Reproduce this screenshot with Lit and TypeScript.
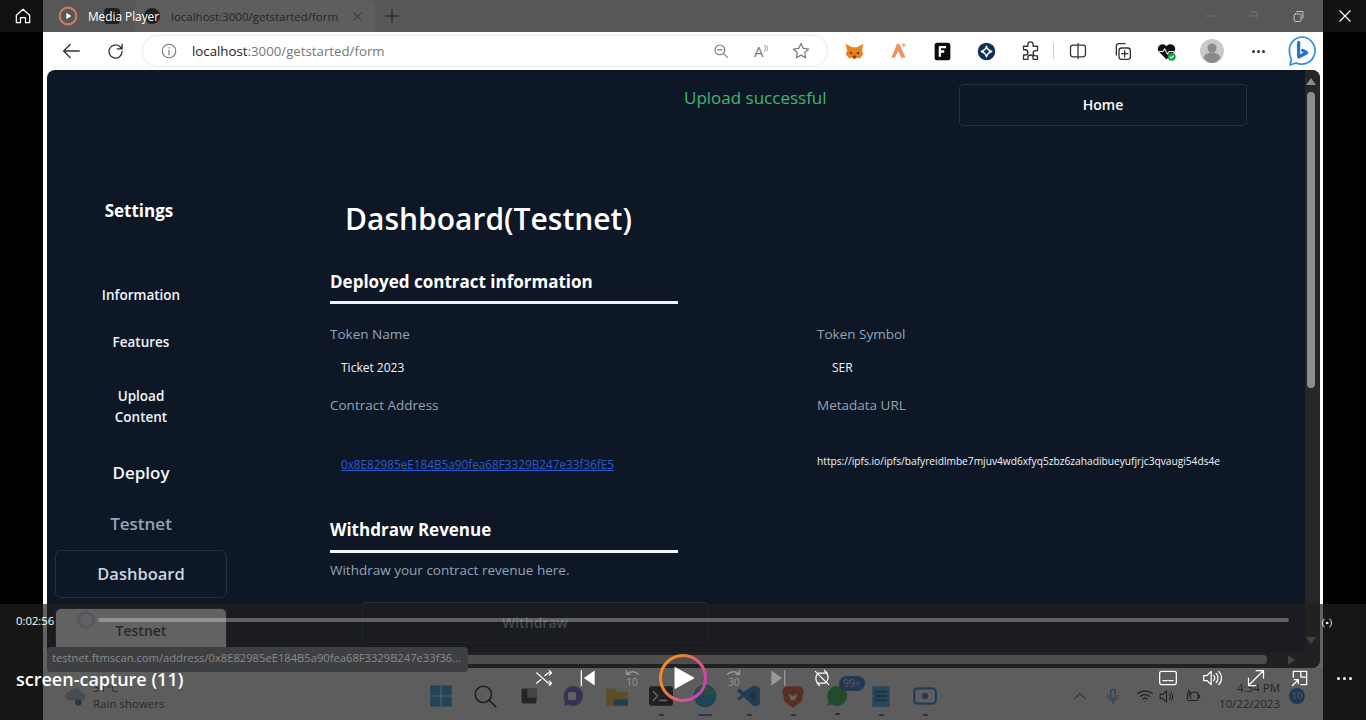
import { LitElement, html, css, svg } from "lit";
import { customElement } from "lit/decorators.js";

const ic = (w: number, body: unknown, vb = 24) =>
  html`<svg width=${w} height=${w} viewBox="0 0 ${vb} ${vb}" fill="none" stroke="currentColor" stroke-width="1.5" stroke-linecap="round" stroke-linejoin="round">${body}</svg>`;

const toolbarLeft = [
  svg`<path d="M21 12H4M11 5l-7 7 7 7"/>`,
  svg`<path d="M19.5 12a7.5 7.5 0 1 1-2.6-5.7L19.5 9M19.5 3.5V9H14"/>`,
];

@customElement("app-root")
export class AppRoot extends LitElement {
  static styles = css`
    :host { display: block; width: 1366px; height: 720px; position: relative; overflow: hidden; background: #000; font-family: "Open Sans", "Noto Sans", sans-serif; color: #fff; }
    .window { margin-left: 43px; width: 1280px; height: 720px; display: flex; flex-direction: column; background: #fff; }
    .tabs { height: 32px; flex: none; background: #e4e4e4; display: flex; align-items: flex-end; color: #222; position: relative; }
    .tab-a { width: 92px; height: 32px; box-sizing: border-box; padding-left: 61px; display: flex; align-items: center; }
    .ghost { width: 16px; height: 16px; border-radius: 4px; background: #222; flex: none; }
    .ghost.round { border-radius: 50%; }
    .tab-b { width: 240px; height: 32px; background: #fff; border-radius: 6px 6px 0 0; display: flex; align-items: center; padding-left: 9px; box-sizing: border-box; padding-right: 11px; font-size: 11.5px; color: #333; white-space: nowrap; }
    .tab-b span { margin-left: 11px; flex: 1; }
    .plus { margin-left: 8px; align-self: center; display: flex; color: #333; }
    .toolbar { height: 38px; flex: none; display: flex; align-items: center; padding: 0 0 0 11px; gap: 0; color: #333; }
    .tbtn { width: 44px; display: flex; justify-content: center; flex: none; }
    .tbtn.l { margin-left: -5px; }
    .addr { width: 684px; margin-left: 6px; height: 30px; border-radius: 15px; background: #fff; box-shadow: 0 0 3px rgba(0,0,0,.18); display: flex; align-items: center; padding: 0 6px 0 17px; box-sizing: border-box; font-size: 13.25px; color: #777; flex: none; }
    .addr b { font-weight: 400; color: #222; }
    .addr .url { margin-left: 14px; flex: 1; }
    .addr .mini { width: 40px; display: flex; justify-content: center; color: #777; }
    .readaloud { font-size: 15px; }
    .readaloud sup { font-size: 8px; }
    .exts { display: flex; align-items: center; margin-left: 5px; flex: none; }
    .ext { width: 44px; display: flex; justify-content: center; align-items: center; flex: none; }
    .ext.push { margin-left: 2px; }
    .sep { width: 1px; height: 16px; background: #ccc; margin: 0 2px 0 1px; }

    .panel { margin: 0 3px 0 4px; height: 598px; flex: none; position: relative; background: #0e1726; border-radius: 8px; overflow: hidden; display: grid; grid-template-columns: 1258px 15px; grid-template-rows: 582px 16px; }
    .page { display: grid; grid-template-columns: 283px 1fr; grid-template-rows: 56px 1fr; overflow: hidden; }
    .top { grid-column: 1 / 3; display: flex; height: 56px; align-items: flex-start; padding-top: 14px; box-sizing: border-box; }
    .ok { margin-left: 637px; width: 275px; color: #3eb872; font-size: 17px; line-height: 28px; white-space: nowrap; }
    .home { width: 288px; height: 42px; border: 1px solid #25303f; border-radius: 4px; box-sizing: border-box; text-align: center; line-height: 40px; font-size: 14px; font-weight: 600; }
    .side { padding: 73px 0 0 8px; display: flex; flex-direction: column; align-items: center; width: 172px; }
    .side .t { font-weight: 700; font-size: 17px; line-height: 24px; margin-left: -4px; }
    .nav { font-size: 13.5px; font-weight: 600; text-align: center; line-height: 21px; color: #f1f5f9; width: 100px; }
    .nav.big { font-size: 17px; font-weight: 600; line-height: 24px; }
    .nav.dim { color: #94a3b8; font-size: 17px; }
    .box { width: 172px; height: 48px; border: 1px solid #25303f; border-radius: 6px; box-sizing: border-box; text-align: center; line-height: 46px; font-size: 16.5px; font-weight: 600; color: #cbd5e1; flex: none; }
    .box.sel { background: #fff; color: #334155; font-size: 14px; font-weight: 600; line-height: 44px; }
    .mt-info { margin-top: 62px; }
    .mt-feat { margin-top: 26px; }
    .mt-upl { margin-top: 33px; }
    .mt-dep { margin-top: 33px; }
    .mt-test { margin-top: 27px; }
    .mt-dash { margin-top: 14px; }
    .mt-sel { margin-top: 10px; }
    .main { padding: 71px 0 0 0; }
    h1 { margin: 0 0 0 15px; font-size: 30px; line-height: 44px; font-weight: 600; white-space: nowrap; }
    h2 { margin: 0; font-size: 17px; line-height: 26px; font-weight: 700; }
    .h2a { margin-top: 28px; }
    .h2b { margin-top: 44px; }
    .rule { width: 348px; height: 3px; background: #f1f5f9; margin-top: 6px; }
    .rule.b { margin-top: 7px; }
    .grid { display: grid; grid-template-columns: 487px 1fr; }
    .g1 { margin-top: 20px; }
    .g2 { margin-top: 15px; }
    .g3 { margin-top: 18px; }
    .g4 { margin-top: 40px; }
    .lab { color: #94a3b8; font-size: 13.5px; line-height: 20px; }
    .lab.w { margin-top: 7px; }
    .val { font-size: 12px; line-height: 18px; color: #f1f5f9; padding-left: 11px; }
    .val.sym { padding-left: 15px; }
    a { font-size: 11.75px; color: #2a5bd0; text-decoration: underline; line-height: 18px; padding-left: 11px; display: block; }
    .meta { font-size: 10.2px; line-height: 16px; color: #f1f5f9; white-space: nowrap; margin-top: -2px; }
    .wbtn { margin: 22px 0 0 32px; width: 346px; height: 41px; border: 1px solid #25303f; border-radius: 4px; box-sizing: border-box; text-align: center; line-height: 39px; font-size: 14px; font-weight: 600; color: #9ca3af; }
    .vbar { background: #262626; display: flex; flex-direction: column; align-items: flex-start; padding-left: 2px; box-sizing: border-box; position: relative; }
    .thumb { width: 8px; height: 296px; border-radius: 4px; background: #8d8d8d; margin-top: 22px; }
    .tri { position: absolute; width: 0; height: 0; border-left: 5px solid transparent; border-right: 5px solid transparent; left: 1px; }
    .tri.u { top: 8px; border-bottom: 7px solid #8d8d8d; }
    .tri.d { bottom: 8px; border-top: 7px solid #9a9a9a; }
    .hbar { grid-column: 1 / 3; background: #262626; position: relative; padding: 3px 0 0 0; }
    .hthumb { width: 1220px; height: 9px; background: #bbb; border-radius: 4px; }
    .tri.r { top: 3px; left: 1241px; border: 5px solid transparent; border-left: 7px solid #9a9a9a; border-right: 0; }
    .taskbar { flex: 1; background: #eee; display: flex; align-items: center; color: #222; position: relative; padding-top: 4px; box-sizing: border-box; }

    /* Media-player chrome floats over the recorded browser */
    .dim-top { position: absolute; left: 0; top: 0; width: 1366px; height: 32px; background: rgba(32,32,32,.72); }
    .dim-bot { position: absolute; left: 0; top: 604px; width: 1366px; height: 116px; background: rgba(32,32,32,.7); }
    .topchrome { position: absolute; left: 0; top: 0; width: 1366px; height: 32px; display: flex; align-items: center; color: #fff; font-size: 11.8px; }
    .homebtn { width: 43px; height: 32px; padding-left: 3px; box-sizing: border-box; display: flex; justify-content: center; align-items: center; background: #111; flex: none; }
    .mp { display: flex; align-items: center; gap: 10px; margin-left: 15px; width: 130px; white-space: nowrap; }
    .winbtns { margin-left: auto; display: flex; align-items: center; color: #777; }
    .winbtns > div { width: 44px; display: flex; justify-content: center; }
    .winbtns > .maxb { color: #ccc; margin-right: 3px; }
    .winbtns > .closeb { width: 43px; height: 32px; align-items: center; background: #111; color: #fff; }
    .seek { position: absolute; left: 98px; top: 618px; width: 1191px; height: 4px; border-radius: 2px; background: rgba(255,255,255,.3); }
    .knob { position: absolute; left: 77px; top: 611px; width: 18px; height: 18px; border: 3px solid #54575b; border-radius: 50%; box-sizing: border-box; }
    .time { position: absolute; left: 16px; top: 612px; font-size: 11.3px; line-height: 18px; }
    .tip { position: absolute; left: 47px; top: 647px; width: 421px; height: 25px; background: #3e3f42; border-radius: 4px; color: #8a8a8a; font-size: 11.2px; line-height: 22px; padding-left: 5px; box-sizing: border-box; white-space: nowrap; overflow: hidden; }
    .title { position: absolute; left: 16px; top: 665px; font-size: 18px; line-height: 28px; font-weight: 600; white-space: nowrap; }
    .controls { position: absolute; left: 522px; top: 653px; height: 50px; display: flex; align-items: center; }
    .c { width: 44px; display: flex; justify-content: center; align-items: center; }
    .c.off { color: #999; }
    .playw { width: 58px; display: flex; justify-content: center; }
    .rightc { position: absolute; left: 1146px; top: 664px; height: 28px; display: flex; align-items: center; }
    .live { position: absolute; left: 1320px; top: 613px; }
    .dots { width: 44px; display: flex; justify-content: center; gap: 3px; }
    .dots i, .tdots i { width: 3px; height: 3px; background: currentColor; border-radius: 50%; display: block; }
    .tdots { display: flex; gap: 2px; }

    .weather { margin-left: 19px; display: flex; gap: 5px; align-items: center; width: 357px; font-size: 11.5px; line-height: 16px; color: #444; flex: none; }
    .tb { width: 44px; display: flex; justify-content: center; flex: none; position: relative; }
    .tb::after { content: ""; position: absolute; bottom: -7px; width: 5px; height: 2px; background: #555; border-radius: 1px; }
    .tb.none::after { display: none; }
    .tb.act::after { width: 14px; background: #2d7dd2; }
    .badge { position: absolute; left: 24px; top: -8px; background: #2674c9; color: #ddd; font-size: 10.5px; border-radius: 9px; padding: 0 4px; line-height: 15px; }
    .tray { margin-left: auto; display: flex; align-items: center; color: #222; padding-right: 18px; }
    .clock { font-size: 11.5px; line-height: 16px; text-align: right; color: #333; margin-left: 18px; white-space: nowrap; }
    .note { width: 16px; height: 16px; background: #2674c9; border-radius: 50%; font-size: 9.5px; line-height: 16px; text-align: center; margin-left: 9px; color: #ddd; }
    .ti { display: flex; justify-content: center; }
    .ti.mic { margin-left: 16px; color: #1f83d0; }
    .ti.wifi { margin-left: 14px; }
    .ti.vol { margin-left: 4px; }
    .ti.bat { margin-left: 8px; }
  `;

  render() {
    return html`
      <div class="window">
        <div class="tabs">
          <div class="tab-a"><div class="ghost"></div></div>
          <div class="tab-b">
            <div class="ghost round"></div>
            <span>localhost:3000/getstarted/form</span>
            ${ic(13, svg`<path d="M5 5l14 14M19 5L5 19"/>`)}
          </div>
          <div class="plus">${ic(18, svg`<path d="M12 3v18M3 12h18"/>`)}</div>
        </div>
        <div class="toolbar">
          <div class="tbtn l">${ic(22, toolbarLeft[0])}</div>
          <div class="tbtn">${ic(21, toolbarLeft[1])}</div>
          <div class="addr">
            ${ic(18, svg`<circle cx="12" cy="12" r="9"/><path d="M12 11v6M12 7.5v.5"/>`)}
            <span class="url"><b>localhost</b>:3000/getstarted/form</span>
            <span class="mini">${ic(18, svg`<circle cx="10.5" cy="10.5" r="6.5"/><path d="M7.5 10.5h6M15.5 15.5l5 5"/>`)}</span>
            <span class="mini readaloud">A<sup>))</sup></span>
            <span class="mini">${ic(20, svg`<path d="M12 3l2.7 5.8 6.3.8-4.6 4.3 1.2 6.2L12 17l-5.6 3.1 1.2-6.2L3 9.6l6.3-.8z"/>`)}</span>
          </div>
          <div class="exts">
            <div class="ext">${ic(21, svg`<path d="M2 3l7 4h6l7-4-1.500 8 1.500 4-4 5-3-1-3 2-3-2-3 1-4-5 1.500-4z" fill="#e8821e" stroke="none"/><path d="M7 12l3 2-3 1zM17 12l-3 2 3 1z" fill="#4a2c14" stroke="none"/><path d="M9.500 18l2.500-2 2.500 2-2.500 2z" fill="#6b4426" stroke="none"/>`)}</div>
            <div class="ext">${ic(20, svg`<path d="M11 3l3 1 7 16h-5l-3.500-8L8 20H4z" fill="#f4905a" stroke="none"/><path d="M19 3v4M17 5h4" stroke="#f4905a" stroke-width="1.200"/>`)}</div>
            <div class="ext">${ic(21, svg`<rect x="3" y="2" width="18" height="20" rx="3" fill="#0d0d0d" stroke="none"/><path d="M9 18V7h7M9 12h5" stroke="#fff" stroke-width="2.600" stroke-linecap="butt"/>`)}</div>
            <div class="ext">${ic(21, svg`<circle cx="12" cy="12" r="10" fill="#12305a" stroke="none"/><path d="M12 6c.8 3 3 5.200 6 6-3 .8-5.200 3-6 6-.8-3-3-5.200-6-6 3-.8 5.200-3 6-6z" stroke="#fff"/>`)}</div>
            <div class="ext">${ic(21, svg`<path d="M9 4a3 3 0 0 1 6 0v2h5v5h-2a3 3 0 0 0 0 6h2v4h-5v-2a3 3 0 0 0-6 0v2H4v-5h2a3 3 0 0 0 0-6H4V6h5z"/>`)}</div>
            <div class="sep"></div>
            <div class="ext">${ic(20, svg`<rect x="3" y="5" width="18" height="14" rx="3"/><path d="M12 3v18"/>`)}</div>
            <div class="ext">${ic(21, svg`<rect x="8" y="8" width="13" height="13" rx="3"/><path d="M14.500 11v7M11 14.500h7M5 16V6a3 3 0 0 1 3-3h7"/>`)}</div>
            <div class="ext">${ic(21, svg`<path d="M12 21L3 12a5 5 0 0 1 9-6 5 5 0 0 1 9 6z" fill="#111" stroke="none"/><path d="M4 12h4l2-3 3 6 2-3h5" stroke="#fff" stroke-width="1.200"/><circle cx="18" cy="18" r="4.500" fill="#1b9e4b" stroke="none"/><path d="M16 18l1.500 1.500 2.500-2.500" stroke="#fff" stroke-width="1.200"/>`)}</div>
            <div class="ext push">${ic(24, svg`<circle cx="12" cy="12" r="12" fill="#c9c9c9" stroke="none"/><circle cx="12" cy="9" r="4.500" fill="#8b8b8b" stroke="none"/><path d="M3.500 19c1-4 4.500-5.500 8.500-5.500s7.500 1.500 8.500 5.500c-2 3-5 5-8.500 5s-6.500-2-8.500-5z" fill="#8b8b8b" stroke="none"/>`)}</div>
            <div class="ext push"><div class="tdots"><i></i><i></i><i></i></div></div>
            <div class="ext" >${ic(32, svg`<path d="M12.500 1.500a10 10 0 0 0-10 10c0 2.500.500 5 1.500 7l-1 4 4.500-1.500a10.200 10.200 0 1 0 5-19.500z" stroke="#2f8fe8" stroke-width="1.300"/><path d="M9.500 5.500v11l6-3.200-3-1.800" stroke="#1f74d9" stroke-width="2.400"/>`)}</div>
          </div>
        </div>

        <div class="panel">
          <div class="page">
            <div class="top">
              <div class="ok">Upload successful</div>
              <div class="home">Home</div>
            </div>
            <nav class="side">
              <div class="t">Settings</div>
              <div class="nav mt-info">Information</div>
              <div class="nav mt-feat">Features</div>
              <div class="nav mt-upl">Upload Content</div>
              <div class="nav big mt-dep">Deploy</div>
              <div class="nav big dim mt-test">Testnet</div>
              <div class="box mt-dash">Dashboard</div>
              <div class="box sel mt-sel">Testnet</div>
            </nav>
            <main class="main">
              <h1>Dashboard(Testnet)</h1>
              <h2 class="h2a">Deployed contract information</h2>
              <div class="rule"></div>
              <div class="grid g1">
                <div class="lab">Token Name</div><div class="lab">Token Symbol</div>
              </div>
              <div class="grid g2">
                <div class="val">Ticket 2023</div><div class="val sym">SER</div>
              </div>
              <div class="grid g3">
                <div class="lab">Contract Address</div><div class="lab">Metadata URL</div>
              </div>
              <div class="grid g4">
                <a href="#">0x8E82985eE184B5a90fea68F3329B247e33f36fE5</a>
                <div class="meta">https://ipfs.io/ipfs/bafyreidlmbe7mjuv4wd6xfyq5zbz6zahadibueyufjrjc3qvaugi54ds4e</div>
              </div>
              <h2 class="h2b">Withdraw Revenue</h2>
              <div class="rule b"></div>
              <div class="lab w">Withdraw your contract revenue here.</div>
              <div class="wbtn">Withdraw</div>
            </main>
          </div>
          <div class="vbar"><div class="tri u"></div><div class="thumb"></div><div class="tri d"></div></div>
          <div class="hbar"><div class="hthumb"></div><div class="tri r"></div></div>
        </div>

        <div class="taskbar">
          <div class="weather">
            ${ic(26, svg`<path d="M7 16a4 4 0 0 1 0-8 6 6 0 0 1 11 1 3.500 3.500 0 0 1 0 7z" fill="#9fb5c9" stroke="none"/><circle cx="15" cy="18" r="3" fill="#2674c9" stroke="none"/>`)}
            <div><div>31°C</div><div>Rain showers</div></div>
          </div>
          <div class="tb none">${ic(26, svg`<path d="M2 2h9.500v9.500H2zM12.500 2H22v9.500h-9.500zM2 12.500h9.500V22H2zM12.500 12.500H22V22h-9.500z" fill="#2a9be0" stroke="none"/>`)}</div>
          <div class="tb none">${ic(26, svg`<circle cx="10.500" cy="10.500" r="7.500"/><path d="M16 16l6 6"/>`, 24)}</div>
          <div class="tb none">${ic(20, svg`<rect x="3" y="3" width="18" height="18" rx="2" fill="#333" stroke="none"/><rect x="10" y="3" width="11" height="11" fill="#999" stroke="none"/>`)}</div>
          <div class="tb none">${ic(24, svg`<path d="M12 2a10 10 0 1 1-5 18.600L3 22l1-5A10 10 0 0 1 12 2z" fill="#6b5fc9" stroke="none"/><rect x="7" y="8" width="8" height="8" rx="1.500" fill="#fff" stroke="none"/>`)}</div>
          <div class="tb none">${ic(26, svg`<path d="M2 5h8l2 3h10v13H2z" fill="#e9b93b" stroke="none"/><rect x="9" y="15" width="13" height="6" fill="#2b86d8" stroke="none"/>`)}</div>
          <div class="tb">${ic(26, svg`<rect x="1" y="3" width="22" height="18" rx="2" fill="#222" stroke="none"/><path d="M5 8l4 4-4 4M11 16h6" stroke="#fff"/>`)}</div>
          <div class="tb act">${ic(26, svg`<circle cx="12" cy="12" r="10.500" fill="#1f9ad6" stroke="none"/><path d="M3 9a9.500 9.500 0 0 1 18 2H9a5 5 0 0 0-6-2z" fill="#38c07c" stroke="none"/>`)}</div>
          <div class="tb">${ic(26, svg`<path d="M17 2l5 2.500v15L17 22 7 13l-4 3-2-1.500 4-3.500-4-3.500L3 5l4 3z" fill="#1f83d0" stroke="none"/><path d="M17 7.500l-5.500 4.500 5.500 4.500z" fill="#555" stroke="none"/>`)}</div>
          <div class="tb">${ic(26, svg`<path d="M5 3h14l3 4-2 10-8 6-8-6L2 7z" fill="#e0562a" stroke="none"/><path d="M8 10l4 2 4-2-2 6h-4z" fill="#fff" stroke="none"/>`)}</div>
          <div class="tb">${ic(24, svg`<path d="M12 2a10 10 0 1 1-5 18.600L2 22l1.500-5A10 10 0 0 1 12 2z" fill="#29b351" stroke="none"/>`)}<span class="badge">99+</span></div>
          <div class="tb">${ic(26, svg`<rect x="4" y="3" width="16" height="19" fill="#3d9de0" stroke="none"/><path d="M7 8h10M7 12h10M7 16h10" stroke="#14517f" stroke-width="1.200"/>`)}</div>
          <div class="tb">${ic(26, svg`<rect x="2" y="5" width="20" height="14" rx="3" stroke="#2b86d8" stroke-width="2"/><circle cx="12" cy="12" r="3" fill="#6b5fc9" stroke="none"/>`)}</div>
          <div class="tray">
            <div class="ti">${ic(16, svg`<path d="M4 16l8-8 8 8"/>`)}</div>
            <div class="ti mic">${ic(18, svg`<rect x="9" y="3" width="6" height="12" rx="3"/><path d="M5 11a7 7 0 0 0 14 0M12 18v4"/>`)}</div>
            <div class="ti wifi">${ic(18, svg`<path d="M2 9a15 15 0 0 1 20 0M5.500 12.500a10 10 0 0 1 13 0M9 16a5 5 0 0 1 6 0M12 19.500v.100"/>`)}</div>
            <div class="ti vol">${ic(17, svg`<path d="M3 9v6h4l5 5V4L7 9zM16 8.500a5 5 0 0 1 0 7M18.500 6a9 9 0 0 1 0 12"/>`)}</div>
            <div class="ti bat">${ic(18, svg`<rect x="6" y="7" width="14" height="11" rx="2"/><path d="M20 11h2v3h-2M7 4l4 6-3 0 3 5"/>`)}</div>
            <div class="clock"><div>4:34 PM</div><div>10/22/2023</div></div>
            <div class="note">10</div>
          </div>
        </div>
      </div>

      <div class="dim-top"></div>
      <div class="topchrome">
        <div class="homebtn">${ic(20, svg`<path d="M4 11l8-7 8 7v9h-5v-6H9v6H4z"/>`)}</div>
        <div class="mp">
          ${ic(20, svg`<circle cx="12" cy="12" r="10" stroke="#d27b63" stroke-width="2.500"/><path d="M10 8l6 4-6 4z" fill="#fff" stroke="none"/>`)}
          <span>Media Player</span>
        </div>
        <div class="winbtns">
          <div>${ic(14, svg`<path d="M5 12h14"/>`)}</div>
          <div>${ic(14, svg`<path d="M4 12h11M7 7V5h10v12h-2"/>`)}</div>
          <div class="maxb">${ic(15, svg`<rect x="5" y="8" width="11" height="12" rx="2"/><path d="M9 4h10v11"/>`)}</div>
          <div class="closeb">${ic(18, svg`<path d="M5 5l14 14M19 5L5 19"/>`)}</div>
        </div>
      </div>

      <div class="dim-bot"></div>
      <div class="seek"></div>
      <div class="knob"></div>
      <div class="time">0:02:56</div>
      <div class="live">${ic(14, svg`<circle cx="12" cy="12" r="1.500" fill="#fff"/><path d="M7 5a10 10 0 0 0 0 14M17 5a10 10 0 0 1 0 14"/>`)}</div>
      <div class="tip">testnet.ftmscan.com/address/0x8E82985eE184B5a90fea68F3329B247e33f36...</div>
      <div class="title">screen-capture (11)</div>
      <div class="controls">
        <div class="c">${ic(18, svg`<path d="M2 5l16 14h4M2 19l6-5M13 9l5-4h4M19 2l3 3-3 3M19 16l3 3-3 3"/>`)}</div>
        <div class="c">${ic(20, svg`<path d="M4 3v18" /><path d="M20 3L7 12l13 9z" fill="#fff" stroke="none"/>`)}</div>
        <div class="c off">${ic(22, svg`<path d="M6 8a9 9 0 0 1 13 0M6 4v4h4"/><text x="12" y="21" font-size="11" fill="#999" stroke="none" text-anchor="middle" font-family="Open Sans">10</text>`)}</div>
        <div class="playw">
          <svg width="50" height="50" viewBox="0 0 50 50"><defs><linearGradient id="g" x1="0" y1=".25" x2="1" y2=".8"><stop offset=".2" stop-color="#f28a1e"/><stop offset=".55" stop-color="#e0607a"/><stop offset=".95" stop-color="#c93fb5"/></linearGradient></defs><circle cx="25" cy="25" r="22.500" fill="none" stroke="url(#g)" stroke-width="3"/><path d="M17 14.500l19 10.500-19 10.500z" fill="#fff" stroke="#fff" stroke-linejoin="round"/></svg>
        </div>
        <div class="c off">${ic(22, svg`<path d="M18 8a9 9 0 0 0-13 0M18 4v4h-4"/><text x="12" y="21" font-size="11" fill="#999" stroke="none" text-anchor="middle" font-family="Open Sans">30</text>`)}</div>
        <div class="c off">${ic(20, svg`<path d="M20 3v18"/><path d="M4 3l13 9-13 9z" fill="#999" stroke="none"/>`)}</div>
        <div class="c">${ic(20, svg`<path d="M4 4l16 16M6 17a8 8 0 0 1 2-11h10l-3-3M18 7a8 8 0 0 1-2 11H6l3 3"/>`)}</div>
      </div>
      <div class="rightc">
        <div class="c">${ic(20, svg`<rect x="2" y="4" width="20" height="16" rx="2.500"/><path d="M6 15h5M13 15h5"/>`)}</div>
        <div class="c">${ic(20, svg`<path d="M2 9v6h4l5 5V4L6 9zM14 9a4 4 0 0 1 0 6M17 6.500a8 8 0 0 1 0 11M20 4a11 11 0 0 1 0 16"/>`)}</div>
        <div class="c">${ic(20, svg`<path d="M3 21L21 3M12 3h9v9M3 12v9h9"/>`)}</div>
        <div class="c">${ic(20, svg`<path d="M4 11V4h16v16h-7M13 4v7h7"/><path d="M3 21l7-7M5 14h5v5"/>`)}</div>
        <div class="dots"><i></i><i></i><i></i></div>
      </div>
    `;
  }
}
